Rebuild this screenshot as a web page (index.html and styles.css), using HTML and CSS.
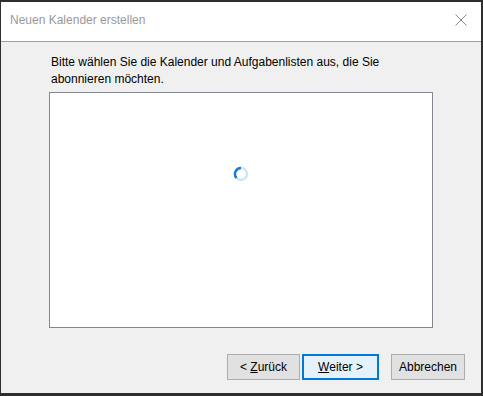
FILE: index.html
```html
<!DOCTYPE html>
<html lang="de">

<head>
    <meta charset="utf-8">
    <title>Neuen Kalender erstellen</title>
    <link rel="stylesheet" href="styles.css">
</head>

<body>
    <div class="window">
        <div class="titlebar">
            <span class="title">Neuen Kalender erstellen</span>
            <svg class="close" width="12" height="12" viewBox="0 0 12 12">
                <path d="M0.5 0.5 L11.5 11.5 M11.5 0.5 L0.5 11.5" stroke="#8a8a8a" stroke-width="1" fill="none" />
            </svg>
        </div>
        <div class="content">
            <p class="intro">Bitte wählen Sie die Kalender und Aufgabenlisten aus, die Sie<br>abonnieren möchten.</p>
            <div class="listbox">
                <svg class="spinner" width="16" height="16" viewBox="0 0 16 16">
                    <circle cx="8" cy="8" r="6" stroke="#cfe3f5" stroke-width="2.4" fill="none" />
                    <path d="M8 2 A6 6 0 0 0 3.5 12" stroke="#1a7ad4" stroke-width="2.4" fill="none" />
                </svg>
            </div>
            <div class="buttons">
                <button class="btn back">&lt; <u>Z</u>urück</button>
                <button class="btn next"><u>W</u>eiter &gt;</button>
                <button class="btn cancel">Abbrechen</button>
            </div>
        </div>
    </div>
</body>

</html>
```

FILE: styles.css
```css
* {
    box-sizing: border-box;
}

body {
    margin: 0;
    background-color: #2b2b2b;
    font-family: 'Liberation Sans', Arial, sans-serif;
    font-size: 12px;
    color: #000000;
}

.window {
    width: 483px;
    height: 396px;
    border-top: 2px solid #2e2e2e;
    border-left: 1px solid #2e2e2e;
    border-right: 2px solid #2e2e2e;
    border-bottom: 3px solid #2e2e2e;
    background-color: #f0f0f0;
    display: flex;
    flex-direction: column;
}

.titlebar {
    height: 40px;
    background-color: #ffffff;
    border-bottom: 1px solid #a0a0a0;
    display: flex;
    align-items: center;
    justify-content: space-between;
    padding: 0 14px 4px 9px;
}

.title {
    color: #999999;
}

.close {
    display: block;
}

.content {
    flex: 1;
    padding: 12px 0 0 48px;
    display: flex;
    flex-direction: column;
}

.intro {
    margin: 0 0 4px 2px;
    line-height: 17px;
}

.listbox {
    width: 384px;
    height: 236px;
    background-color: #ffffff;
    border: 1px solid #828790;
    display: flex;
    align-items: center;
    justify-content: center;
}

.spinner {
    margin: 0 0 72px 0;
}

.buttons {
    display: flex;
    justify-content: flex-end;
    padding: 26px 16px 0 0;
}

.btn {
    height: 26px;
    font-family: inherit;
    font-size: 12px;
    color: #000000;
    background-color: #e1e1e1;
    border: 1px solid #adadad;
    padding: 0;
}

.back {
    width: 73px;
}

.next {
    width: 77px;
    margin-left: 2px;
    background-color: #e5f1fb;
    border: 2px solid #0078d7;
}

.cancel {
    width: 74px;
    margin-left: 12px;
}
```
